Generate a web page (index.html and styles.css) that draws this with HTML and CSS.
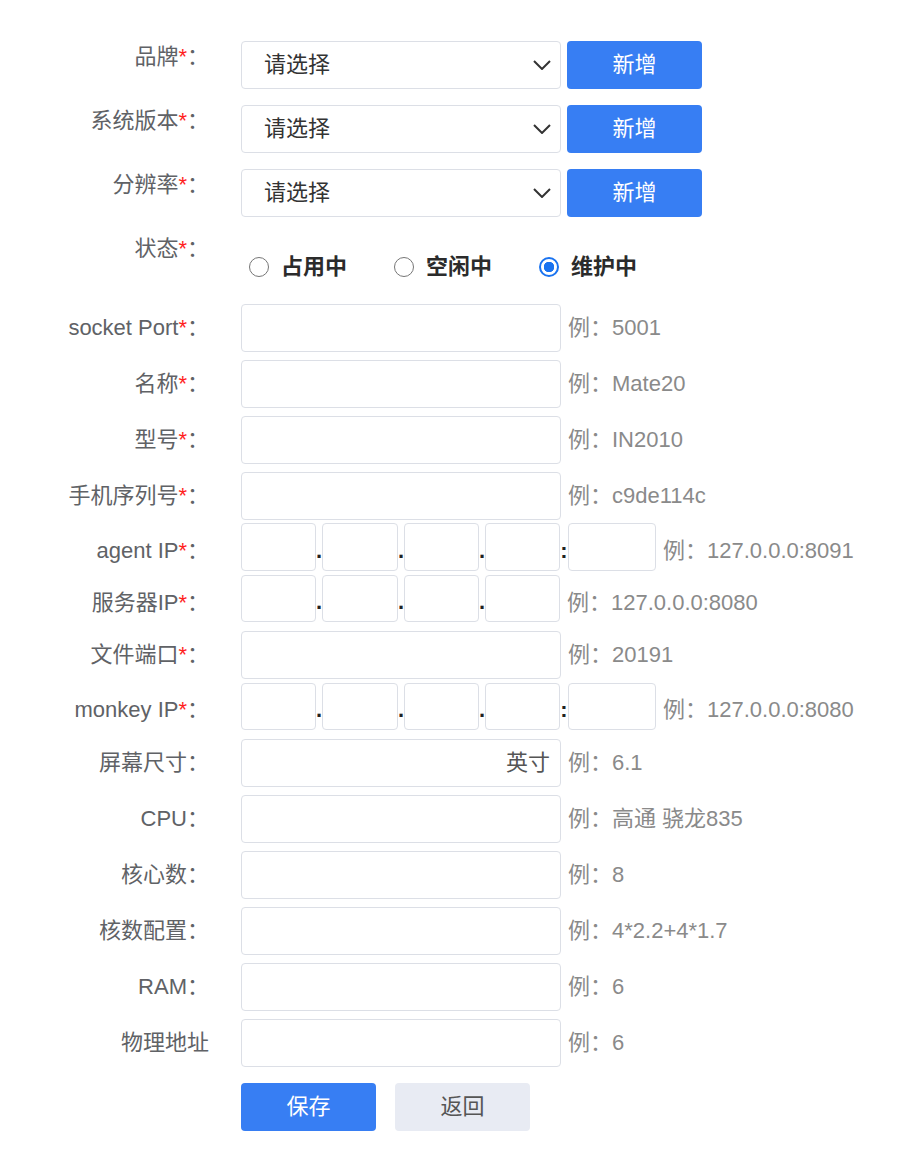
FILE: index.html
```html
<!DOCTYPE html>
<html lang="zh-CN">
<head>
<meta charset="utf-8">
<title>设备表单</title>
<link rel="stylesheet" href="styles.css">
</head>
<body>
<form class="form">
  <div class="row row-select">
    <label class="label">品牌<span class="req">*</span>：</label>
    <div class="select"><span>请选择</span><svg class="chev" width="18" height="10" viewBox="0 0 18 10"><path d="M1 1 L9 9 L17 1" fill="none" stroke="#333" stroke-width="2"/></svg></div>
    <button type="button" class="btn btn-primary add">新增</button>
  </div>
  <div class="row row-select">
    <label class="label">系统版本<span class="req">*</span>：</label>
    <div class="select"><span>请选择</span><svg class="chev" width="18" height="10" viewBox="0 0 18 10"><path d="M1 1 L9 9 L17 1" fill="none" stroke="#333" stroke-width="2"/></svg></div>
    <button type="button" class="btn btn-primary add">新增</button>
  </div>
  <div class="row row-select">
    <label class="label">分辨率<span class="req">*</span>：</label>
    <div class="select"><span>请选择</span><svg class="chev" width="18" height="10" viewBox="0 0 18 10"><path d="M1 1 L9 9 L17 1" fill="none" stroke="#333" stroke-width="2"/></svg></div>
    <button type="button" class="btn btn-primary add">新增</button>
  </div>
  <div class="row row-status">
    <label class="label">状态<span class="req">*</span>：</label>
    <div class="radios">
      <label class="radio"><input type="radio" name="st"><span>占用中</span></label>
      <label class="radio"><input type="radio" name="st"><span>空闲中</span></label>
      <label class="radio"><input type="radio" name="st" checked><span>维护中</span></label>
    </div>
  </div>
  <div class="row">
    <label class="label">socket Port<span class="req">*</span>：</label>
    <input class="input" type="text">
    <span class="hint">例：5001</span>
  </div>
  <div class="row">
    <label class="label">名称<span class="req">*</span>：</label>
    <input class="input" type="text">
    <span class="hint">例：Mate20</span>
  </div>
  <div class="row">
    <label class="label">型号<span class="req">*</span>：</label>
    <input class="input" type="text">
    <span class="hint">例：IN2010</span>
  </div>
  <div class="row">
    <label class="label">手机序列号<span class="req">*</span>：</label>
    <input class="input" type="text">
    <span class="hint">例：c9de114c</span>
  </div>
  <div class="row row-ip">
    <label class="label">agent IP<span class="req">*</span>：</label>
    <input class="ip" type="text"><span class="sep">.</span><input class="ip ip-w" type="text"><span class="sep">.</span><input class="ip" type="text"><span class="sep">.</span><input class="ip" type="text"><span class="sep colon">:</span><input class="ip port" type="text">
    <span class="hint">例：127.0.0.0:8091</span>
  </div>
  <div class="row row-ip">
    <label class="label">服务器IP<span class="req">*</span>：</label>
    <input class="ip" type="text"><span class="sep">.</span><input class="ip ip-w" type="text"><span class="sep">.</span><input class="ip" type="text"><span class="sep">.</span><input class="ip" type="text">
    <span class="hint">例：127.0.0.0:8080</span>
  </div>
  <div class="row">
    <label class="label">文件端口<span class="req">*</span>：</label>
    <input class="input" type="text">
    <span class="hint">例：20191</span>
  </div>
  <div class="row row-ip">
    <label class="label">monkey IP<span class="req">*</span>：</label>
    <input class="ip" type="text"><span class="sep">.</span><input class="ip ip-w" type="text"><span class="sep">.</span><input class="ip" type="text"><span class="sep">.</span><input class="ip" type="text"><span class="sep colon">:</span><input class="ip port" type="text">
    <span class="hint">例：127.0.0.0:8080</span>
  </div>
  <div class="row">
    <label class="label">屏幕尺寸：</label>
    <div class="input suffix-box"><span class="suffix">英寸</span></div>
    <span class="hint">例：6.1</span>
  </div>
  <div class="row">
    <label class="label">CPU：</label>
    <input class="input" type="text">
    <span class="hint">例：高通 骁龙835</span>
  </div>
  <div class="row">
    <label class="label">核心数：</label>
    <input class="input" type="text">
    <span class="hint">例：8</span>
  </div>
  <div class="row">
    <label class="label">核数配置：</label>
    <input class="input" type="text">
    <span class="hint">例：4*2.2+4*1.7</span>
  </div>
  <div class="row">
    <label class="label">RAM：</label>
    <input class="input" type="text">
    <span class="hint">例：6</span>
  </div>
  <div class="row">
    <label class="label">物理地址</label>
    <input class="input" type="text">
    <span class="hint">例：6</span>
  </div>
  <div class="row row-actions">
    <span class="label"></span>
    <button type="button" class="btn btn-primary">保存</button>
    <button type="button" class="btn btn-default">返回</button>
  </div>
</form>
</body>
</html>
```
FILE: styles.css
```css
html, body {
  margin: 0;
  padding: 0;
  background: #fff;
}
body {
  font-family: "Liberation Sans", "Noto Sans CJK SC", sans-serif;
  font-size: 22px;
  color: #606266;
}
.form {
  display: flex;
  flex-direction: column;
  padding-top: 41px;
}
.row {
  display: flex;
  align-items: center;
  margin-bottom: 8px;
}
.row-select {
  align-items: flex-start;
  margin-bottom: 16px;
}
.row-status {
  align-items: flex-start;
  height: 63px;
}
.row-ip {
  height: 47.3px;
  margin-top: -4.7px;
  margin-bottom: 9px;
}
.row-ip .label,
.row-ip .hint {
  padding-top: 8px;
}
.row-actions {
  margin-top: 8px;
}
.label {
  flex: none;
  width: 209px;
  margin-right: 32px;
  text-align: right;
  line-height: 48px;
  white-space: nowrap;
}
.row-select .label,
.row-status .label {
  line-height: 32px;
}
.req {
  color: #ff1f1f;
}
.select {
  flex: none;
  width: 320px;
  height: 48px;
  line-height: 46px;
  box-sizing: border-box;
  border: 1px solid #dcdfe6;
  border-radius: 4px;
  display: flex;
  align-items: center;
  justify-content: space-between;
  padding: 0 9px 0 22px;
  color: #333;
}
.select span {
  line-height: 44px;
}
.chev {
  display: block;
}
.btn {
  flex: none;
  width: 135px;
  height: 48px;
  line-height: 48px;
  border: none;
  border-radius: 4px;
  font-family: inherit;
  font-size: 22px;
  padding: 0;
  cursor: pointer;
}
.btn-primary {
  background: #377ef3;
  color: #fff;
}
.btn-default {
  background: #e8ebf3;
  color: #555;
  margin-left: 19px;
}
.add {
  margin-left: 6px;
}
.radios {
  display: flex;
  align-items: center;
  margin-top: 22px;
  margin-left: 8px;
  line-height: 24px;
}
.radio {
  display: flex;
  align-items: center;
  margin-right: 47px;
  font-weight: bold;
  color: #2b2b2b;
}
.radio input {
  appearance: none;
  -webkit-appearance: none;
  margin: 0 12px 0 0;
  width: 20px;
  height: 20px;
  box-sizing: border-box;
  border: 1.5px solid #767676;
  border-radius: 50%;
  background: #fff;
}
.radio input:checked {
  border: 2px solid #1a73f0;
  background: radial-gradient(circle, #1a73f0 0 5px, #fff 5.5px);
}
.input {
  flex: none;
  width: 320px;
  height: 48px;
  box-sizing: border-box;
  border: 1px solid #dcdfe6;
  border-radius: 4px;
  font: inherit;
  padding: 0 10px;
  background: #fff;
  outline: none;
}
.suffix-box {
  display: flex;
  align-items: center;
  justify-content: flex-end;
  color: #555;
  line-height: 44px;
}
.hint {
  margin-left: 7px;
  color: #8a8a8a;
  white-space: nowrap;
  line-height: 46px;
}
.ip {
  flex: none;
  width: 75px;
  height: 47.3px;
  box-sizing: border-box;
  border: 1px solid #dcdfe6;
  border-radius: 4px;
  font: inherit;
  padding: 0 6px;
  background: #fff;
  outline: none;
}
.ip-w {
  width: 76px;
}
.port {
  width: 88px;
}
.sep {
  flex: none;
  width: 6px;
  align-self: flex-end;
  line-height: 22px;
  padding-bottom: 9px;
  text-align: center;
  color: #222;
  font-weight: bold;
}
.colon {
  width: 8px;
}
```
